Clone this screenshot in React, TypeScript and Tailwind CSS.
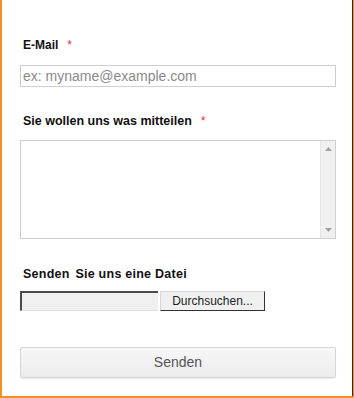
import React from "react";

export default function App() {
  return (
    <div
      className="w-[354px] h-[398px] bg-white border-l-2 border-l-[#f39020] border-b-2 border-b-[#f39020] flex"
      style={{ fontFamily: '"Liberation Sans", Arial, sans-serif' }}
    >
      <div className="flex-1 flex flex-col pl-[18px] pr-[16px] pt-[38px]">
        <div className="flex items-center h-[14px] text-[12px] font-bold text-[#111] pl-[3px]">
          E-Mail<span className="text-[#e8303a] ml-[9px] font-normal">*</span>
        </div>
        <div className="mt-[13px] h-[22px] border border-[#cfcfcf] flex items-center pl-[2px] text-[14px] text-[#8a8a8a]">
          ex: myname@example.com
        </div>

        <div className="mt-[27px] flex items-center h-[14px] text-[12.5px] font-bold text-[#111] pl-[3px]">
          Sie wollen uns was mitteilen<span className="text-[#e8303a] ml-[9px] font-normal">*</span>
        </div>
        <div className="mt-[12px] h-[99px] border border-[#cfcfcf] flex">
          <div className="flex-1" />
          <div className="w-[15px] bg-[#f0f0f0] border-l border-l-[#e6e6e6] flex flex-col items-center justify-between py-[6px]">
            <svg width="7" height="4" viewBox="0 0 7 4">
              <path d="M0 4 L3.5 0 L7 4 Z" fill="#a0a0a0" />
            </svg>
            <svg width="7" height="4" viewBox="0 0 7 4">
              <path d="M0 0 L3.5 4 L7 0 Z" fill="#a0a0a0" />
            </svg>
          </div>
        </div>

        <div className="mt-[28px] flex items-center h-[14px] text-[12.5px] font-bold text-[#111] pl-[3px] tracking-[0.25px] whitespace-pre">
          <span className="mr-[2px]">Senden</span> Sie uns eine Datei
        </div>
        <div className="mt-[10px] flex items-stretch h-[20px]">
          <div className="w-[138px] bg-[#f0f0f0] border-t-2 border-l-2 border-t-[#4a4a4a] border-l-[#4a4a4a] border-b border-b-[#e0e0e0]" />
          <div className="ml-[2px] w-[105px] bg-[#f0f0f0] border border-[#d8d8d8] border-r-[#333] border-b-[#333] flex items-center justify-center text-[12px] text-[#222]">
            Durchsuchen...
          </div>
        </div>

        <button className="mt-[36px] h-[31px] rounded-[2px] border border-[#d6d6d6] bg-gradient-to-b from-[#f7f7f7] to-[#ececec] shadow-[0_1px_1px_rgba(0,0,0,0.08)] text-[14px] text-[#555] flex items-center justify-center">
          Senden
        </button>
      </div>
      <div className="w-[1px] bg-[#2a2a2a]" />
      <div className="w-[1px] bg-[#f39020]" />
    </div>
  );
}
